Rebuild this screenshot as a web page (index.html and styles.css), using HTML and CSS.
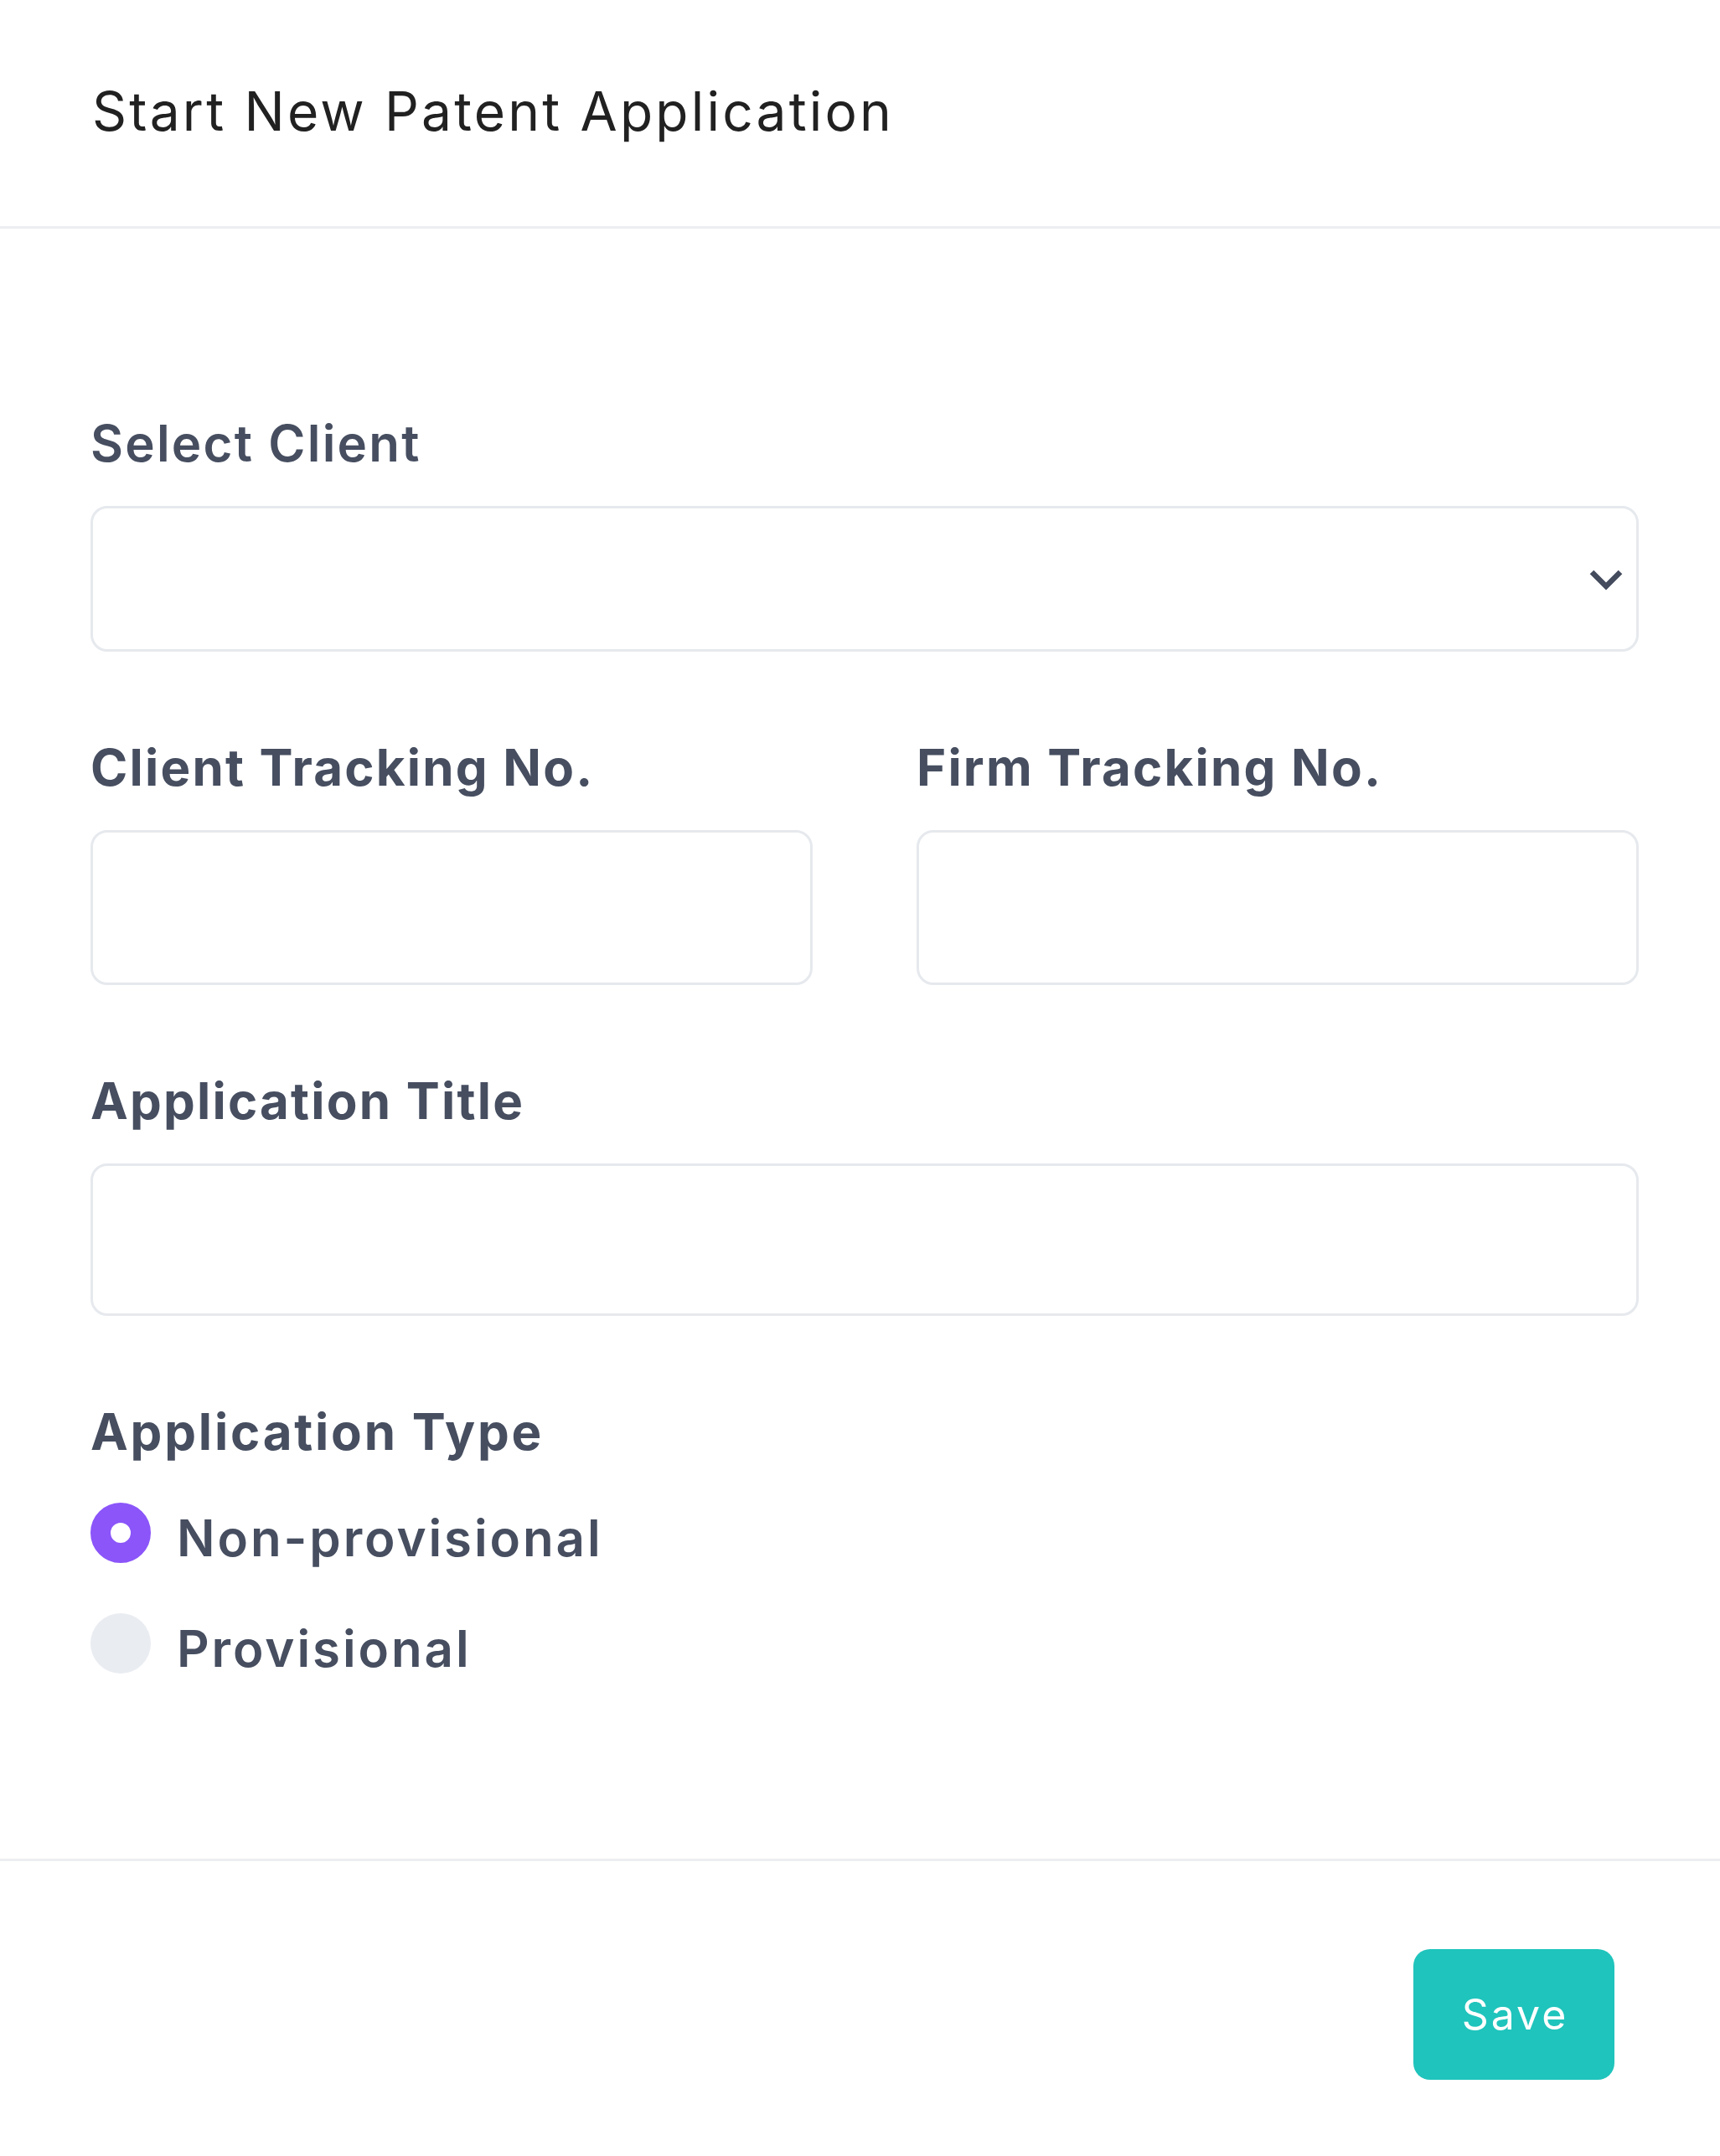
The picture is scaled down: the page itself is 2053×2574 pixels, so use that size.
FILE: index.html
```html
<!DOCTYPE html>
<html lang="en">
<head>
<meta charset="utf-8">
<title>Start New Patent Application</title>
<link rel="stylesheet" href="styles.css">
</head>
<body>
<div class="modal">
  <header class="modal-header">
    <h1 class="modal-title">Start New Patent Application</h1>
  </header>
  <main class="modal-body">
    <div class="field">
      <label class="label label-inter" for="client">Select Client</label>
      <div class="select-wrap">
        <select id="client" class="control select"></select>
        <svg class="chevron" width="40" height="26" viewBox="0 0 40 26" aria-hidden="true">
          <polyline points="3,4 20,21 37,4" fill="none" stroke="#434b5d" stroke-width="6.5"/>
        </svg>
      </div>
    </div>
    <div class="row">
      <div class="field">
        <label class="label" for="ctn">Client Tracking No.</label>
        <input id="ctn" class="control input-tall" type="text">
      </div>
      <div class="field">
        <label class="label" for="ftn">Firm Tracking No.</label>
        <input id="ftn" class="control input-tall" type="text">
      </div>
    </div>
    <div class="field">
      <label class="label" for="title">Application Title</label>
      <input id="title" class="control input-mid" type="text">
    </div>
    <div class="field">
      <span class="label label-wide">Application Type</span>
      <div class="radios">
        <label class="radio">
          <span class="dot dot-on"></span>
          <span class="radio-text">Non-provisional</span>
        </label>
        <label class="radio">
          <span class="dot"></span>
          <span class="radio-text">Provisional</span>
        </label>
      </div>
    </div>
  </main>
  <footer class="modal-footer">
    <button class="btn-save" type="button">Save</button>
  </footer>
</div>
</body>
</html>
```

FILE: styles.css
```css
* { box-sizing: border-box; }
html, body { margin: 0; padding: 0; background: #ffffff; }
body { font-family: Inter, "Noto Sans", sans-serif; }

.modal { width: 2053px; }

.modal-header {
  height: 273px;
  display: flex;
  align-items: center;
  padding-left: 110px;
  border-bottom: 3px solid #eceef1;
}
.modal-title {
  margin: 0;
  font-family: Inter, sans-serif;
  font-weight: 400;
  font-size: 64px;
  line-height: 64px;
  color: #212121;
  letter-spacing: 3.2px;
  position: relative;
  top: -2px;
}

.modal-body {
  padding: 226px 97px 221px 108px;
  display: flex;
  flex-direction: column;
  gap: 108px;
}
.field { display: flex; flex-direction: column; gap: 45px; }
.row {
  display: grid;
  grid-template-columns: 1fr 1fr;
  column-gap: 124px;
}

.label {
  display: block;
  font-family: Inter, sans-serif;
  font-weight: 700;
  font-size: 60px;
  line-height: 60px;
  color: #464e60;
  letter-spacing: 2.2px;
}
.label-inter { font-weight: 600; letter-spacing: 2.2px; }
.label-wide { letter-spacing: 2.8px; }

.control {
  display: block;
  width: 100%;
  border: 3px solid #e6e9ed;
  border-radius: 20px;
  background: #ffffff;
  font: inherit;
  outline: none;
  margin: 0;
}
.select-wrap { position: relative; }
.select {
  height: 174px;
  appearance: none;
  -webkit-appearance: none;
}
.chevron {
  position: absolute;
  right: 19px;
  top: 75px;
}
.input-tall { height: 185px; }
.input-mid { height: 182px; }

.radios {
  display: flex;
  flex-direction: column;
  gap: 60px;
  margin-top: 10px;
}
.radio {
  display: flex;
  align-items: center;
  gap: 31px;
  height: 72px;
}
.dot {
  width: 72px;
  height: 72px;
  border-radius: 50%;
  background: #e9ecf1;
  flex: none;
}
.dot-on {
  background: #ffffff;
  border: 24px solid #8b55f9;
}
.radio-text {
  font-family: Inter, sans-serif;
  font-weight: 600;
  font-size: 60px;
  line-height: 60px;
  color: #464e60;
  letter-spacing: 2.9px;
  position: relative;
  top: 6px;
}

.modal-footer {
  border-top: 3px solid #eceef1;
  display: flex;
  justify-content: flex-end;
  padding: 105px 126px 91px 0;
}
.btn-save {
  width: 240px;
  height: 156px;
  border: none;
  border-radius: 20px;
  background: #1fc4bc;
  color: #ffffff;
  font-family: Inter, sans-serif;
  font-weight: 400;
  font-size: 50px;
  letter-spacing: 3px;
  padding: 0 0 0 3px;
}
```
